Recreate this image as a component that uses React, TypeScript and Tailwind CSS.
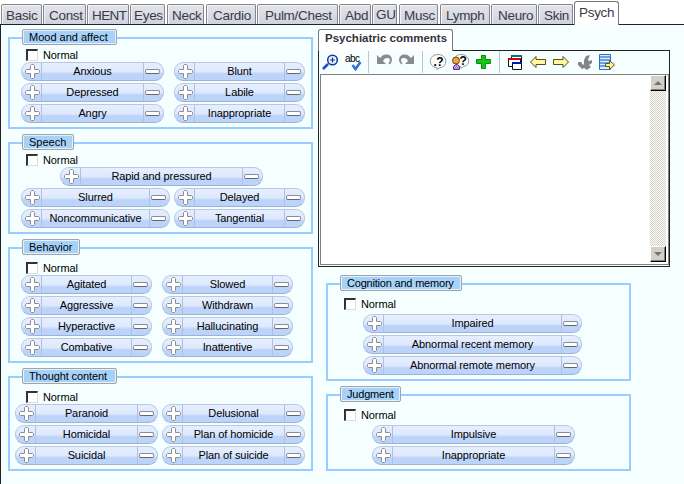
import React from "react";

type PillData = { label: string; w: string };

const tabs: { t: string; c: string }[] = [
  { t: "Basic", c: "w-[41px] pl-[4px] pt-[2px]" },
  { t: "Const", c: "ml-px w-[43px] pl-[5px] pt-[2px]" },
  { t: "HENT", c: "ml-px w-[42px] pl-[4px] pt-[2px] tracking-[-0.6px]" },
  { t: "Eyes", c: "ml-px w-[35px] pl-[3px] pt-[2px]" },
  { t: "Neck", c: "ml-[2px] w-[37px] pl-[4px] pt-[2px]" },
  { t: "Cardio", c: "ml-[2px] w-[50px] pl-[6px] pt-[2px]" },
  { t: "Pulm/Chest", c: "ml-px w-[81px] pl-[7px] pt-[2px]" },
  { t: "Abd", c: "ml-px w-[32px] pl-[5px] pt-[2px]" },
  { t: "GU", c: "ml-px w-[25px] pl-[3px] pt-px" },
  { t: "Musc", c: "ml-[2px] w-[39px] pl-[4px] pt-[2px]" },
  { t: "Lymph", c: "ml-[2px] w-[50px] pl-[5px] pt-[2px]" },
  { t: "Neuro", c: "ml-px w-[46px] pl-[6px] pt-[2px]" },
  { t: "Skin", c: "ml-px w-[35px] pl-[5px] pt-[2px]" },
];

function Plus() {
  return (
    <svg width="15" height="15" viewBox="0 0 15 15" className="block">
      <path
        d="M6.500 .5h2l1 1v4h4l1 1v2l-1 1h-4v4l-1 1h-2l-1-1v-4h-4l-1-1v-2l1-1h4v-4z"
        fill="#fff"
        stroke="#8b8c94"
      />
    </svg>
  );
}

function Pill({ label, w }: PillData) {
  return (
    <div
      className={`flex h-[19px] shrink-0 overflow-hidden rounded-[9px] border border-[#b9c7e2] border-b-[#9fb2d6] bg-linear-to-b from-[#e6effe] from-0% via-[#dee9fe] via-50% to-[#bcd3fa] to-65% ${w}`}
    >
      <div className="flex w-5 shrink-0 items-center justify-center border-r border-[#afc0e2] pl-px">
        <Plus />
      </div>
      <div className="flex-1 whitespace-nowrap text-center leading-[17px] tracking-[-0.1px]">{label}</div>
      <div className="flex w-5 shrink-0 items-center border-l border-[#afc0e2] pl-px">
        <div className="h-[5px] w-[15px] rounded-[2px] border border-[#8b8c94] border-b-[#66666c] bg-white" />
      </div>
    </div>
  );
}

function Group({
  title,
  box,
  legend,
  gap,
  pillGap = "mt-px",
  children,
}: {
  title: string;
  box: string;
  legend: string;
  gap: string;
  pillGap?: string;
  children: React.ReactNode;
}) {
  return (
    <section className={`w-[305px] shrink-0 border-2 border-[#99ccff] ${box}`}>
      <div
        className={`-mt-[10px] ml-3 h-4 whitespace-nowrap rounded-[2px] border border-[#a0a4a8] bg-[#a6d2fa] pl-[6px] leading-[15px] shadow-[inset_0_0_0_1px_#e4f2fd] ${legend}`}
      >
        {title}
      </div>
      <div className={`ml-4 flex h-3 items-center ${gap}`}>
        <div className="h-3 w-3 border-l-2 border-t-2 border-r border-b border-[#333] border-r-[#ddd] border-b-[#ddd] bg-white" />
        <span className="ml-[5px] leading-3 tracking-[-0.1px]">Normal</span>
      </div>
      <div className={`flex flex-col gap-[2px] ${pillGap}`}>{children}</div>
    </section>
  );
}

const Row = ({ children, c }: { children: React.ReactNode; c: string }) => (
  <div className={`flex ${c}`}>{children}</div>
);

function Toolbar() {
  return (
    <svg width="350" height="23" viewBox="319 51 350 23" className="block shrink-0">
      <path d="M323 69l5-5" stroke="#1c4fc0" strokeWidth="2.6" />
      <circle cx="332.5" cy="60" r="4.8" fill="#e8f4ff" stroke="#16349c" strokeWidth="1.5" />
      <path d="M330 60h5M332.500 57.500v5" stroke="#16349c" strokeWidth="1.2" />
      <text x="345" y="62" fontSize="10" fontFamily="Liberation Sans, sans-serif" fill="#000" textLength="15">abc</text>
      <path d="M352.500 65l3 4 5-7" fill="none" stroke="#356fd4" strokeWidth="2.6" />
      <path d="M368.500 51v22M422.500 51v22M499.500 51v22" stroke="#c4c4c4" />
      <path d="M377 55v9h9l-3-3c1-2 2-3 4-3 3 0 4 2 1.500 5.500l1 1c4-3 3-9-2-10-3-.5-5 .5-7.500 3.500z" fill="#8b8b8b" />
      <path d="M414 55v9h-9l3-3c-1-2-2-3-4-3-3 0-4 2-1.500 5.500l-1 1c-4-3-3-9 2-10 3-.5 5 .5 7.500 3.500z" fill="#8b8b8b" />
      <path d="M438 54.500c10 0 10 13 2 13l-3 2v-2c-9 0-9-13 1-13z" fill="#fff" stroke="#999" />
      <text x="433.500" y="65.500" fontSize="12" fontWeight="bold" fontFamily="Liberation Sans, sans-serif" textLength="10">.?</text>
      <path d="M461 54.500c10 0 10 12 2 12l-2 2v-2c-9 0-9-12 0-12z" fill="#fff" stroke="#999" />
      <text x="459.500" y="65" fontSize="12" fontWeight="bold" fontFamily="Liberation Sans, sans-serif">?</text>
      <circle cx="456" cy="60.500" r="3.500" fill="#f0a23b" stroke="#774411" />
      <path d="M453.500 69.500v-3l2-2h2l2 2v3z" fill="#b38ae6" stroke="#553080" />
      <path d="M481.500 55.500h4v4h5v4h-5v5h-4v-5h-5v-4h5z" fill="#12c712" stroke="#0b8b0b" />
      <path d="M511.500 56.500h10v8h-10z" fill="#fff" stroke="#111" />
      <path d="M511 56h11" stroke="#077" strokeWidth="2" />
      <path d="M508.500 59.500h12v7h-12z" fill="#fff" stroke="#111" />
      <path d="M508 59h13" stroke="#e00000" strokeWidth="2" />
      <path d="M512.500 62.500h9v7h-9z" fill="#fff" stroke="#111" />
      <path d="M512 63h10" stroke="#001bb0" strokeWidth="2" />
      <path d="M530.500 62l5.500-5.500v3h9.500v5h-9.500v3z" fill="#fff99c" stroke="#554c25" />
      <path d="M568.500 62l-5.500-5.500v3h-9.500v5h9.500v3z" fill="#fff99c" stroke="#554c25" />
      <path d="M578 62l3 0 2 3 1-1v-4l2-4 4-1-2 5 1 1 3-1v3l-3 2 2 2-4 3-3-2-2 1-4-4z" fill="#858585" />
      <path d="M599.500 54.500h11v15h-11z" fill="#dceeff" stroke="#356eb6" />
      <path d="M600 57h10M600 60h10M600 63h10M600 66h6" stroke="#438bdc" strokeWidth="1.600" />
      <path d="M605.500 63.500h4v-3l5 4.500-5 4.500v-3h-4z" fill="#fff38c" stroke="#5a5224" />
    </svg>
  );
}

function ScrollButton({ down = false }: { down?: boolean }) {
  return (
    <div className="flex h-4 w-4 shrink-0 items-center justify-center border border-[#fff] border-r-black border-b-black bg-[#d4d0c8] shadow-[inset_-1px_-1px_0_#808080]">
      <svg width="8" height="4" viewBox="0 0 8 4" className="block">
        <path d={down ? "M0 0h8l-4 4z" : "M0 4h8l-4-4z"} fill="#77736c" />
      </svg>
    </div>
  );
}

export default function App() {
  return (
    <div className="flex h-[484px] w-[684px] flex-col overflow-hidden bg-[#f5ffff] font-['Liberation_Sans',sans-serif] text-[11px] text-black">
      <nav className="flex h-[25px] shrink-0 items-end border-b border-[#222] bg-white pl-px text-[13.5px] leading-[17px] tracking-[-0.3px] text-[#3a3a42]">
        {tabs.map(({ t, c }) => (
          <div
            key={t}
            className={`h-5 shrink-0 overflow-hidden whitespace-nowrap rounded-t-[2px] border border-b-0 border-[#85858a] bg-linear-to-b from-[#e4e4ea] to-[#cfd3e0] shadow-[inset_1px_1px_0_#f4f4f8] ${c}`}
          >
            {t}
          </div>
        ))}
        <div className="-mb-px ml-px h-6 w-[45px] shrink-0 rounded-t-[3px] border border-b-0 border-[#77777c] bg-white pl-1 pt-[2px]">
          Psych
        </div>
      </nav>
      <div className="flex flex-1 border-l border-[#222] pl-[7px]">
        <div className="flex w-[305px] shrink-0 flex-col">
          <Group title="Mood and affect" box="mt-3 h-[92px]" legend="w-[95px]" gap="mt-1">
            <Row c="ml-[11px] gap-[10px]"><Pill label="Anxious" w="w-[143px]" /><Pill label="Blunt" w="w-[131px]" /></Row>
            <Row c="ml-[11px] gap-[10px]"><Pill label="Depressed" w="w-[143px]" /><Pill label="Labile" w="w-[131px]" /></Row>
            <Row c="ml-[11px] gap-[10px]"><Pill label="Angry" w="w-[143px]" /><Pill label="Inappropriate" w="w-[131px]" /></Row>
          </Group>
          <Group title="Speech" box="mt-[13px] h-[92px]" legend="w-[52px]" gap="mt-1">
            <Row c="ml-[50px]"><Pill label="Rapid and pressured" w="w-[203px]" /></Row>
            <Row c="ml-[11px] gap-1"><Pill label="Slurred" w="w-[149px]" /><Pill label="Delayed" w="w-[131px]" /></Row>
            <Row c="ml-[11px] gap-1"><Pill label="Noncommunicative" w="w-[149px]" /><Pill label="Tangential" w="w-[131px]" /></Row>
          </Group>
          <Group title="Behavior" box="mt-[13px] h-[116px]" legend="w-[58px]" gap="mt-[7px]">
            <Row c="ml-[11px] gap-[10px]"><Pill label="Agitated" w="w-[131px]" /><Pill label="Slowed" w="w-[131px]" /></Row>
            <Row c="ml-[11px] gap-[10px]"><Pill label="Aggressive" w="w-[131px]" /><Pill label="Withdrawn" w="w-[131px]" /></Row>
            <Row c="ml-[11px] gap-[10px]"><Pill label="Hyperactive" w="w-[131px]" /><Pill label="Hallucinating" w="w-[131px]" /></Row>
            <Row c="ml-[11px] gap-[10px]"><Pill label="Combative" w="w-[131px]" /><Pill label="Inattentive" w="w-[131px]" /></Row>
          </Group>
          <Group title="Thought content" box="mt-[13px] h-[95px]" legend="w-[95px] tracking-[-0.1px]" gap="mt-[7px]">
            <Row c="ml-[5px] gap-1"><Pill label="Paranoid" w="w-[143px]" /><Pill label="Delusional" w="w-[143px]" /></Row>
            <Row c="ml-[5px] gap-1"><Pill label="Homicidal" w="w-[143px]" /><Pill label="Plan of homicide" w="w-[143px]" /></Row>
            <Row c="ml-[5px] gap-1"><Pill label="Suicidal" w="w-[143px]" /><Pill label="Plan of suicide" w="w-[143px]" /></Row>
          </Group>
        </div>
        <div className="ml-[5px] flex flex-col pt-1">
          <div className="z-10 h-[22px] w-[135px] whitespace-nowrap rounded-t-[3px] border border-b-0 border-[#77777c] bg-white pl-[6px] text-[11.5px] font-bold leading-4 text-[#33333b]">
            Psychiatric comments
          </div>
          <div className="-mt-px flex h-[217px] w-[352px] flex-col border border-[#222] bg-[#f5ffff]">
            <Toolbar />
            <div className="mb-px ml-px flex flex-1 border border-[#808080] bg-white pb-[2px] pr-[2px]">
              <div className="flex-1" />
              <div className="flex w-4 flex-col justify-between bg-[#e9e7e3] bg-[repeating-conic-gradient(#d4d0c8_0_25%,#fff_0_50%)] bg-size-[2px_2px]">
                <ScrollButton />
                <ScrollButton down />
              </div>
            </div>
          </div>
          <Group title="Cognition and memory" box="ml-2 mt-4 h-[98px]" legend="w-[122px] tracking-[-0.2px]" gap="mt-[7px]" pillGap="mt-1">
            <Row c="ml-[35px]"><Pill label="Impaired" w="w-[219px]" /></Row>
            <Row c="ml-[35px]"><Pill label="Abnormal recent memory" w="w-[219px]" /></Row>
            <Row c="ml-[35px]"><Pill label="Abnormal remote memory" w="w-[219px]" /></Row>
          </Group>
          <Group title="Judgment" box="ml-2 mt-[13px] h-[77px]" legend="w-[61px] tracking-[-0.2px]" gap="mt-[7px]" pillGap="mt-1">
            <Row c="ml-[44px]"><Pill label="Impulsive" w="w-[203px]" /></Row>
            <Row c="ml-[44px]"><Pill label="Inappropriate" w="w-[203px]" /></Row>
          </Group>
        </div>
      </div>
    </div>
  );
}
